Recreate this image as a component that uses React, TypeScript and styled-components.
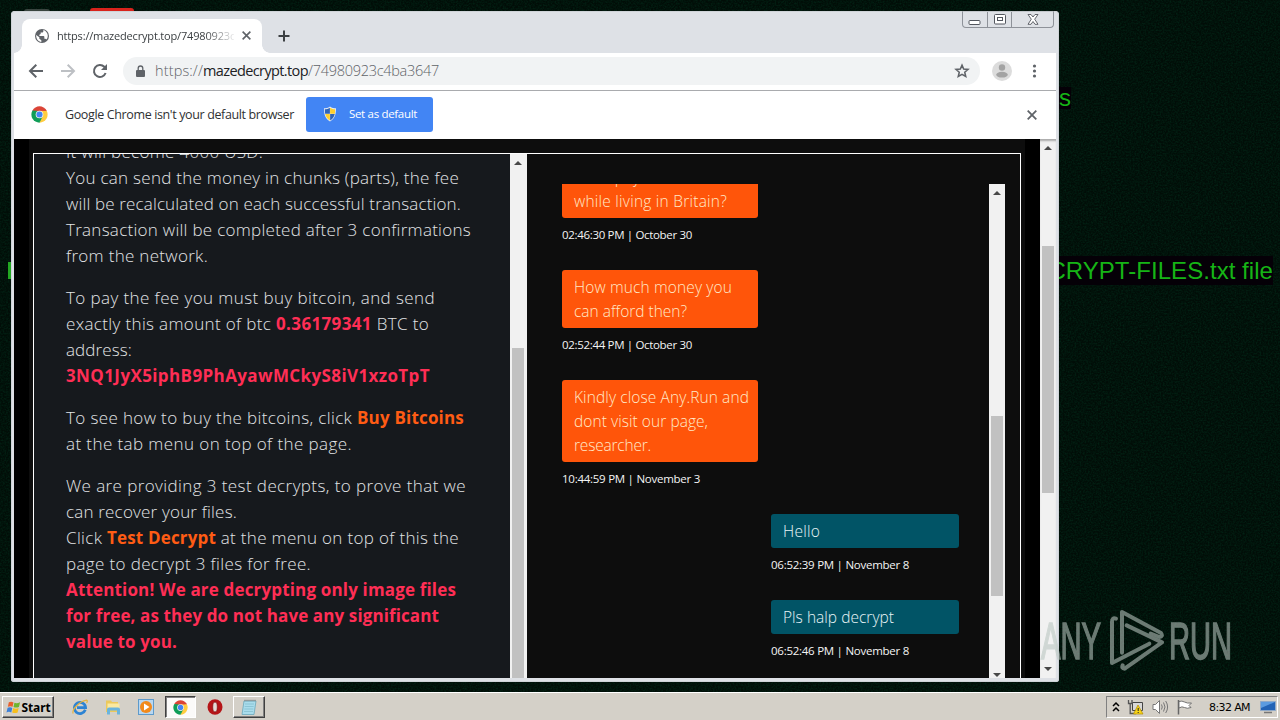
import React, { useLayoutEffect, useRef } from "react";
import styled, { createGlobalStyle, css } from "styled-components";

const Global = createGlobalStyle`
  * { box-sizing: border-box; }
  body { margin: 0; overflow: hidden; background: #01110a; }
  svg { display: block; flex: none; }
`;

const ui = `"Open Sans", "Noto Sans", sans-serif`;

/* ---------- text that is spaced out to a given width ---------- */
const FitSpan = styled.span`
  display: inline-block;
  white-space: pre;
`;

function Fit({ w, children }: { w: number; children: React.ReactNode }) {
  const ref = useRef<HTMLSpanElement>(null);
  useLayoutEffect(() => {
    const el = ref.current;
    if (!el) return;
    el.style.letterSpacing = "0px";
    const natural = el.getBoundingClientRect().width;
    const count = (el.textContent || "").length || 1;
    el.style.letterSpacing = `${(w - natural) / count}px`;
  }, [w]);
  return <FitSpan ref={ref}>{children}</FitSpan>;
}

/* ---------- desktop ---------- */
const Desktop = styled.div`
  position: relative;
  width: 1280px;
  height: 720px;
  overflow: hidden;
  background: #010d07;
  display: flex;
  flex-direction: column;
  justify-content: flex-end;
`;
const Grain = styled.svg`
  position: absolute;
  inset: 0;
`;
const WallText = styled.div<{ $top: number; $right: number; $h: number }>`
  position: absolute;
  top: ${(p) => p.$top}px;
  right: ${(p) => p.$right}px;
  height: ${(p) => p.$h}px;
  background: #050007;
  color: #16b416;
  font: 24px/${(p) => p.$h}px "Liberation Sans", Arial, sans-serif;
  white-space: nowrap;
`;
const WallEdge = styled.div`
  position: absolute;
  left: 8px;
  top: 262px;
  width: 3px;
  height: 17px;
  background: #22a822;
`;
const IconEdge = styled.div<{ $x: number; $y: number; $w: number; $c: string }>`
  position: absolute;
  left: ${(p) => p.$x}px;
  top: ${(p) => p.$y}px;
  width: ${(p) => p.$w}px;
  height: 6px;
  background: ${(p) => p.$c};
  border-radius: 3px 3px 0 0;
`;

/* ---------- browser window ---------- */
const Win = styled.div`
  position: absolute;
  left: 11px;
  top: 11px;
  width: 1048px;
  height: 671px;
  padding: 0 3px 4px;
  background: #dee1e6;
  border-radius: 4px 4px 3px 3px;
  box-shadow: inset 0 0 0 1px #cfd3d8;
  display: flex;
  flex-direction: column;
  font-family: ${ui};
`;
const TitleBar = styled.div`
  height: 42px;
  flex: none;
  display: flex;
  align-items: flex-start;
  padding-left: 8px;
`;
const Tab = styled.div`
  position: relative;
  margin-top: 8px;
  width: 240px;
  height: 34px;
  background: #fff;
  border-radius: 8px 8px 0 0;
  display: flex;
  align-items: center;
  padding: 0 11px 1px 12px;
  font-size: 11px;
  color: #3c4043;
  &::before, &::after {
    content: "";
    position: absolute;
    bottom: 0;
    width: 8px;
    height: 8px;
  }
  &::before { left: -8px; background: radial-gradient(circle at 0 0, transparent 7.5px, #fff 8px); }
  &::after { right: -8px; background: radial-gradient(circle at 100% 0, transparent 7.5px, #fff 8px); }
`;
const TabLabel = styled.div`
  width: 177px;
  margin: 0 8px 0 7px;
  white-space: nowrap;
  mask-image: linear-gradient(90deg, #000 148px, transparent 180px);
`;
const NewTab = styled.div`
  margin: 18px 0 0 15px;
`;
const Controls = styled.div`
  margin-left: auto;
  margin-right: 2px;
  width: 92px;
  height: 17px;
  display: flex;
  border: 1px solid #8e9299;
  border-top-color: #c3c7cc;
  border-radius: 0 0 4px 4px;
`;
const Control = styled.div<{ $w: number }>`
  width: ${(p) => p.$w}px;
  display: flex;
  align-items: center;
  justify-content: center;
  padding-bottom: 1px;
  & + & { border-left: 1px solid #8e9299; }
`;
const ToolBar = styled.div`
  height: 38px;
  flex: none;
  background: #fff;
  border-bottom: 1px solid #a9abae;
  display: flex;
  align-items: center;
  padding: 0 14px 1px;
`;
const NavIcons = styled.div`
  display: flex;
  gap: 16px;
  margin-right: 15px;
`;
const Omnibox = styled.div`
  width: 857px;
  height: 28px;
  border-radius: 14px;
  background: #f1f3f4;
  display: flex;
  align-items: center;
  padding: 0 10px 0 12px;
  font-size: 14.5px;
  font-weight: 300;
  color: #5f6368;
  svg:last-child { margin-left: auto; }
`;
const Url = styled.div`
  margin: -2px 0 0 9px;
  b { font-weight: 400; color: #202124; }
`;
const Avatar = styled.div`
  margin: 0 16px 0 12px;
`;
const InfoBar = styled.div`
  height: 48px;
  flex: none;
  background: #fff;
  display: flex;
  align-items: center;
  padding: 0 19px 1px 17px;
  font-size: 12.5px;
  color: #2f3133;
  svg:last-child { margin-left: auto; }
`;
const InfoText = styled.div`
  width: 241px;
  margin-left: 17px;
`;
const DefaultButton = styled.div`
  width: 127px;
  height: 35px;
  margin-top: -1px;
  border-radius: 3px;
  background: #4285f4;
  color: #fff;
  display: flex;
  align-items: center;
  gap: 11px;
  padding: 0 0 1px 16px;
  font-size: 11.5px;
`;

/* ---------- web page ---------- */
const Page = styled.div`
  flex: 1;
  min-height: 0;
  display: flex;
  background: #000;
  padding-left: 15px;
`;
const Body = styled.div`
  width: 996px;
  margin-right: 15px;
  background: #0d0d0d;
  padding: 14px 4px 0;
`;
const Frame = styled.div`
  height: 100%;
  border: 1px solid #fff;
  border-bottom: 0;
  display: flex;
  overflow: hidden;
`;
const Info = styled.div`
  width: 476px;
  height: 100%;
  background: #16191d;
  overflow: hidden;
  display: flex;
  flex-direction: column;
  padding-left: 32px;
`;
const Para = styled.div<{ $first?: boolean }>`
  margin: ${(p) => (p.$first ? "-15px 0 16px" : "0 0 16px")};
  font-size: 17px;
  font-weight: 300;
  line-height: 26px;
  color: #e2e4e6;
  display: flex;
  flex-direction: column;
  align-items: flex-start;
`;
const Strong = styled.span<{ $c: "red" | "orange" }>`
  font-weight: 700;
  color: ${(p) => (p.$c === "red" ? "#ff2e55" : "#ff5c14")};
`;
const Bar = styled.div<{ $w?: number; $edge?: boolean }>`
  width: ${(p) => p.$w || 16}px;
  height: 100%;
  flex: none;
  background: #f1f1f1;
  display: flex;
  flex-direction: column;
  align-items: center;
  padding-right: ${(p) => (p.$w ? p.$w - 16 : 0)}px;
  ${(p) => p.$edge && css`box-shadow: inset 0 3px 2px -1px #aaa;`}
`;
const Thumb = styled.div<{ $gap: number; $h: number }>`
  width: 12px;
  flex: none;
  margin-top: ${(p) => p.$gap}px;
  height: ${(p) => p.$h}px;
  background: #c1c1c1;
`;
const Arrow = styled.div<{ $down?: boolean; $gap: number }>`
  width: 0;
  height: 0;
  flex: none;
  border: 4px solid transparent;
  ${(p) =>
    p.$down
      ? css`border-top-color: #484848; border-bottom: 0; margin-top: auto; margin-bottom: ${p.$gap}px;`
      : css`border-bottom-color: #484848; border-top: 0; margin-top: ${p.$gap}px;`}
`;
const Chat = styled.div`
  flex: 1;
  padding: 30px 15px 0 35px;
  display: flex;
`;
const Messages = styled.div`
  flex: 1;
  height: 100%;
  overflow: hidden;
  display: flex;
  flex-direction: column;
`;
const Message = styled.div<{ $mine?: boolean; $lift?: number }>`
  flex: none;
  width: ${(p) => (p.$mine ? 188 : 196)}px;
  margin-left: ${(p) => (p.$mine ? 209 : 0)}px;
  margin-top: ${(p) => -(p.$lift || 0)}px;
  margin-bottom: 24px;
`;
const Bubble = styled.div<{ $mine?: boolean }>`
  padding: 5px 0 5px 12px;
  border-radius: 3px;
  background: ${(p) => (p.$mine ? "#015466" : "#ff550a")};
  color: ${(p) => (p.$mine ? "#e9f5f7" : "#ffe9c8")};
  font-size: 15.5px;
  font-weight: 300;
  line-height: 24px;
  display: flex;
  flex-direction: column;
  align-items: flex-start;
`;
const Stamp = styled.div`
  height: 28px;
  padding-top: 8px;
  line-height: 17px;
  font-size: 11.5px;
  color: #f4f4f4;
`;

/* ---------- taskbar ---------- */
const TaskBar = styled.div`
  position: relative;
  height: 28px;
  background: #d4d0c8;
  border-top: 1px solid #fff;
  display: flex;
  align-items: center;
  padding: 3px 2px 2px;
  font: 11px "DejaVu Sans", Tahoma, sans-serif;
`;
const TaskButton = styled.div<{ $w: number; $down?: boolean }>`
  width: ${(p) => p.$w}px;
  height: 22px;
  display: flex;
  align-items: center;
  justify-content: center;
  gap: 1px;
  font: bold 12px "Noto Sans", Tahoma, sans-serif;
  border: 1px solid;
  border-color: ${(p) => (p.$down ? "#404040 #fff #fff #404040" : "#fff #404040 #404040 #fff")};
  box-shadow: ${(p) => (p.$down ? "inset 1px 1px #808080" : "inset -1px -1px #808080")};
  background: ${(p) => (p.$down ? "#fbfaf9" : "#d4d0c8")};
`;
const Quick = styled.div`
  display: flex;
  gap: 17px;
  margin: 0 11px 0 18px;
`;
const Launcher = styled.div`
  margin: 0 10px 0 11px;
`;
const Tray = styled.div`
  margin-left: auto;
  width: 172px;
  height: 22px;
  border: 1px solid;
  border-color: #808080 #fff #fff #808080;
  display: flex;
  align-items: center;
  gap: 7px;
  padding: 0 1px 0 5px;
`;
const Clock = styled.div`
  width: 41px;
  margin-left: 9px;
  margin-right: auto;
  white-space: nowrap;
`;
const Watermark = styled.svg`
  position: absolute;
  left: 1036px;
  top: 602px;
`;

/* ---------- icons ---------- */
const ChromeLogo = ({ size = 18 }: { size?: number }) => (
  <svg width={size} height={size} viewBox="0 0 48 48">
    <path d="M24 24 4.1 12.5A23 23 0 0 1 43.9 12.5Z" fill="#db4437" />
    <path d="M24 24 43.9 12.5A23 23 0 0 1 24 47Z" fill="#ffcd40" />
    <path d="M24 24 24 47A23 23 0 0 1 4.1 12.5Z" fill="#0f9d58" />
    <path d="M24 13.5H43.9L33.5 29Z" fill="#ffcd40" />
    <path d="M33.2 29.2 24 47 20 32Z" fill="#0f9d58" />
    <path d="M14.8 29.2 4.1 12.5 21 14Z" fill="#0f9d58" />
    <path d="M24 13.5H43.9L42 10H24Z" fill="#db4437" />
    <circle cx="24" cy="24" r="10.8" fill="#f1f1f1" />
    <circle cx="24" cy="24" r="8.6" fill="#4285f4" />
  </svg>
);
const Cross = ({ s = 9 }: { s?: number }) => (
  <svg width={s} height={s} viewBox="0 0 10 10" stroke="#5f6368" strokeWidth="1.8">
    <path d="M.7.7 9.3 9.3M9.3.7.7 9.3" />
  </svg>
);
const Globe = () => (
  <svg width="16" height="16" viewBox="0 0 24 24">
    <circle cx="12" cy="12" r="10.5" fill="#5f6368" />
    <path d="M3.2 10.5 8 14v2l3 2.3V21C6.5 20.5 3 16.5 3.2 10.5ZM14 3v1.8c0 1.2-.9 2-2 2h-2v2.2L8 10v2h6.2c.8 0 1.3.6 1.3 1.3V16h1.2c.9 0 1.6.6 1.9 1.4A9 9 0 0 0 14 3Z" fill="#fff" />
  </svg>
);
const Shield = () => (
  <svg width="16" height="16" viewBox="0 0 16 16">
    <path d="M8 .5C6 2 4 2.2 2 2.2 2 8 3 12.5 8 15.5 13 12.5 14 8 14 2.2 12 2.2 10 2 8 .5Z" fill="#e8eef5" />
    <path d="M7.9 1.8C6 3 4.6 3.3 2.8 3.3L3.1 7.8H7.9Z" fill="#2f64b9" />
    <path d="M8.1 1.8C10 3 11.4 3.3 13.2 3.3L12.9 7.8H8.1Z" fill="#ffd02e" />
    <path d="M3.2 8C4 11 5.2 13 7.9 14.6V8Z" fill="#ffd02e" />
    <path d="M12.8 8C12 11 10.8 13 8.1 14.6V8Z" fill="#2f64b9" />
  </svg>
);

type Msg = { lines: [string, number][]; stamp: string; w: number; mine?: boolean; lift?: number };
const messages: Msg[] = [
  { lines: [["Can I pay it", 80], ["while living in Britain?", 153]], stamp: "02:46:30 PM | October 30", w: 130, lift: 24 },
  { lines: [["How much money you", 158], ["can afford then?", 113]], stamp: "02:52:44 PM | October 30", w: 130 },
  { lines: [["Kindly close Any.Run and", 175], ["dont visit our page,", 134], ["researcher.", 77]], stamp: "10:44:59 PM | November 3", w: 138 },
  { lines: [["Hello", 37]], stamp: "06:52:39 PM | November 8", w: 138, mine: true },
  { lines: [["Pls halp decrypt", 111]], stamp: "06:52:46 PM | November 8", w: 138, mine: true },
];

export default function App() {
  return (
    <>
      <Global />
      <Desktop>
        <Grain width="1280" height="720">
          <filter id="grain" colorInterpolationFilters="sRGB">
            <feTurbulence type="fractalNoise" baseFrequency="0.6" numOctaves="2" seed="4" />
            <feColorMatrix values="0 0 0 0 0.01  0 0 0 0 0.2  0 0 0 0 0.12  0 1 0 0 -0.34" />
          </filter>
          <rect width="1280" height="720" filter="url(#grain)" />
        </Grain>
        <WallText $top={87} $right={209} $h={22}>files</WallText>
        <WallText $top={256} $right={7} $h={29}><Fit w={258}>DECRYPT-FILES.txt file</Fit></WallText>
        <WallEdge />
        <IconEdge $x={24} $y={9} $w={26} $c="#39443f" />
        <IconEdge $x={90} $y={8} $w={44} $c="#d8231c" />

        <Win>
          <TitleBar>
            <Tab>
              <Globe />
              <TabLabel><Fit w={178}>https://mazedecrypt.top/74980923c</Fit></TabLabel>
              <Cross />
            </Tab>
            <NewTab>
              <svg width="14" height="14" viewBox="0 0 14 14" stroke="#3c4043" strokeWidth="2"><path d="M7 1.5V12.5M1.5 7H12.5" /></svg>
            </NewTab>
            <Controls>
              <Control $w={24}>
                <svg width="13" height="13" viewBox="0 0 13 13"><rect x="1" y="7.5" width="11" height="4" rx="1" fill="#fff" stroke="#53575f" /></svg>
              </Control>
              <Control $w={25}>
                <svg width="12" height="11" viewBox="0 0 12 11" fill="#fff" stroke="#53575f"><rect x=".5" y=".5" width="11" height="9.5" rx="1" /><rect x="3.5" y="3.5" width="5" height="3" /></svg>
              </Control>
              <Control $w={42}>
                <svg width="12" height="11" viewBox="0 0 12 11"><path d="M1 .5H4L6 3 8 .5H11L7.7 5.2 11 10.3H8L6 7.5 4 10.3H1L4.3 5.2Z" fill="#fff" stroke="#53575f" strokeWidth=".9" /></svg>
              </Control>
            </Controls>
          </TitleBar>

          <ToolBar>
            <NavIcons>
              <svg width="16" height="16" viewBox="0 0 16 16" fill="none" stroke="#5f6368" strokeWidth="2"><path d="M15 8H2.5M8.3 1.7 2 8 8.3 14.3" /></svg>
              <svg width="16" height="16" viewBox="0 0 16 16" fill="none" stroke="#bdc0c4" strokeWidth="2"><path d="M1 8H13.5M7.7 1.7 14 8 7.7 14.3" /></svg>
              <svg width="16" height="16" viewBox="0 0 16 16" fill="none" stroke="#5f6368" strokeWidth="2"><path d="M13.6 10A6 6 0 1 1 12.3 3.8L14 5.5" /><path d="M15 1V7H9Z" fill="#5f6368" stroke="none" /></svg>
            </NavIcons>
            <Omnibox>
              <svg width="11" height="13" viewBox="0 0 11 13"><rect x="1" y="5" width="9" height="7" rx="1" fill="#5f6368" /><path d="M3.2 5V3.3a2.3 2.3 0 0 1 4.6 0V5" fill="none" stroke="#5f6368" strokeWidth="1.3" /></svg>
              <Url><Fit w={48}>https://</Fit><Fit w={105}><b>mazedecrypt.top</b></Fit><Fit w={131}>/74980923c4ba3647</Fit></Url>
              <svg width="16" height="16" viewBox="0 0 24 24" fill="none" stroke="#5f6368" strokeWidth="2.3"><path d="M12 3.2 14.5 9.1 21 9.7 16.1 13.9 17.6 20.2 12 16.9 6.4 20.2 7.9 13.9 3 9.7 9.5 9.1Z" /></svg>
            </Omnibox>
            <Avatar>
              <svg width="20" height="20" viewBox="0 0 20 20"><circle cx="10" cy="10" r="10" fill="#dcdcdc" /><circle cx="10" cy="6.5" r="3.2" fill="#a3a3a3" /><ellipse cx="10" cy="13.7" rx="5.8" ry="2.9" fill="#a3a3a3" /></svg>
            </Avatar>
            <svg width="12" height="16" viewBox="0 0 12 16" fill="#5f6368"><circle cx="6.5" cy="3" r="1.6" /><circle cx="6.5" cy="8" r="1.6" /><circle cx="6.5" cy="13" r="1.6" /></svg>
          </ToolBar>

          <InfoBar>
            <ChromeLogo size={17} />
            <InfoText><Fit w={229}>Google Chrome isn't your default browser</Fit></InfoText>
            <DefaultButton><Shield /><Fit w={68}>Set as default</Fit></DefaultButton>
            <Cross s={10} />
          </InfoBar>

          <Page>
            <Body>
              <Frame>
                <Info>
                  <Para $first>
                    <Fit w={197}>It will become 4000 USD.</Fit>
                    <Fit w={393}>You can send the money in chunks (parts), the fee</Fit>
                    <Fit w={395}>will be recalculated on each successful transaction.</Fit>
                    <Fit w={405}>Transaction will be completed after 3 confirmations</Fit>
                    <Fit w={142}>from the network.</Fit>
                  </Para>
                  <Para>
                    <Fit w={369}>To pay the fee you must buy bitcoin, and send</Fit>
                    <Fit w={363}>exactly this amount of btc <Strong $c="red">0.36179341</Strong> BTC to</Fit>
                    <Fit w={66}>address:</Fit>
                    <Fit w={364}><Strong $c="red">3NQ1JyX5iphB9PhAyawMCkyS8iV1xzoTpT</Strong></Fit>
                  </Para>
                  <Para>
                    <span><Fit w={291}>To see how to buy the bitcoins, click </Fit><Fit w={107}><Strong $c="orange">Buy Bitcoins</Strong></Fit></span>
                    <Fit w={286}>at the tab menu on top of the page.</Fit>
                  </Para>
                  <Para>
                    <Fit w={400}>We are providing 3 test decrypts, to prove that we</Fit>
                    <Fit w={171}>can recover your files.</Fit>
                    <span><Fit w={41}>Click </Fit><Fit w={109}><Strong $c="orange">Test Decrypt</Strong></Fit><Fit w={243}> at the menu on top of this the</Fit></span>
                    <Fit w={245}>page to decrypt 3 files for free.</Fit>
                    <Fit w={390}><Strong $c="red">Attention! We are decrypting only image files</Strong></Fit>
                    <Fit w={373}><Strong $c="red">for free, as they do not have any significant</Strong></Fit>
                    <Fit w={111}><Strong $c="red">value to you.</Strong></Fit>
                  </Para>
                </Info>
                <Bar $w={17}>
                  <Arrow $gap={7} />
                  <Thumb $gap={183} $h={340} />
                </Bar>
                <Chat>
                  <Messages>
                    {messages.map((m) => (
                      <Message key={m.stamp} $mine={m.mine} $lift={m.lift}>
                        <Bubble $mine={m.mine}>
                          {m.lines.map(([t, w]) => <Fit key={t} w={w}>{t}</Fit>)}
                        </Bubble>
                        <Stamp><Fit w={m.w}>{m.stamp}</Fit></Stamp>
                      </Message>
                    ))}
                  </Messages>
                  <Bar>
                    <Arrow $gap={7} />
                    <Thumb $gap={221} $h={180} />
                    <Arrow $down $gap={1} />
                  </Bar>
                </Chat>
              </Frame>
            </Body>
            <Bar $edge>
              <Arrow $gap={7} />
              <Thumb $gap={96} $h={247} />
              <Arrow $down $gap={7} />
            </Bar>
          </Page>
        </Win>

        <Watermark width="200" height="76" viewBox="1036 602 200 76">
          <g fill="#b9c6c0" stroke="#b9c6c0" strokeWidth="1.6" opacity=".58" fontFamily="Liberation Sans" fontSize="51">
            <text x="1041" y="659" textLength="60" lengthAdjust="spacingAndGlyphs">ANY</text>
            <text x="1169" y="659" textLength="63" lengthAdjust="spacingAndGlyphs">RUN</text>
          </g>
          <g transform="translate(980 590) scale(.33333)" fill="none" stroke="#b9c6c0" strokeWidth="12" opacity=".58" strokeLinejoin="round" strokeLinecap="round">
            <path d="M408 86Q396 82 396 96V219L508 161" />
            <path d="M426 188V66L543 129Q550 140 538 141L512 131" />
            <path d="M440 106 546 157 434 236Q424 236 428 226" />
          </g>
        </Watermark>

        <TaskBar>
          <TaskButton $w={52}>
            <svg width="15" height="15" viewBox="0 0 16 16">
              <path d="M3 2.5Q5.5 1 8 2.6L7 7.3Q4.5 6 2 7.3Z" fill="#e8602c" />
              <path d="M9 3Q11.5 4.2 15 2.5L13.8 7.4Q11 8.8 8 7.5Z" fill="#6fb52e" />
              <path d="M1.7 8.3Q4.3 7 6.7 8.4L5.6 13.2Q3 12 .5 13.3Z" fill="#3c80d8" />
              <path d="M7.7 8.6Q10.5 9.9 13.5 8.5L12.4 13.2Q9.5 14.6 6.6 13.4Z" fill="#f7bf1d" />
            </svg>
            <Fit w={29}>Start</Fit>
          </TaskButton>
          <Quick>
            <svg width="16" height="16" viewBox="0 0 16 16">
              <path d="M13.3 10.8A5.6 5.6 0 1 1 13.6 8.6H5" fill="none" stroke="#2d83d3" strokeWidth="2.7" />
              <path d="M1.2 14.5C-.5 11 7 2.5 14.6 1.2 15.8 1.5 15.2 3 14.5 4" fill="none" stroke="#e3b341" strokeWidth="1.2" />
            </svg>
            <svg width="16" height="16" viewBox="0 0 16 16">
              <path d="M1 1.5H6L7 3H13V13H1Z" fill="#ecc95c" />
              <path d="M2.5 4.5H14.5V11H2.5Z" fill="#fbe9a0" />
              <path d="M2 15.5V10.5Q2 8.5 4 8.5H13Q15 8.5 15 10.5V15.5H12V11.5H5V15.5Z" fill="#6ab4dd" />
            </svg>
            <svg width="16" height="16" viewBox="0 0 16 16">
              <rect x=".5" y=".5" width="15" height="15" fill="#b9d7f0" stroke="#5d9acb" />
              <circle cx="8" cy="8" r="6" fill="#f28a1b" />
              <path d="M6 4.5 11.5 8 6 11.5Z" fill="#fff" />
            </svg>
          </Quick>
          <TaskButton $w={31} $down><ChromeLogo size={15} /></TaskButton>
          <Launcher>
            <svg width="16" height="16" viewBox="0 0 16 16">
              <ellipse cx="8" cy="8" rx="7.5" ry="7.7" fill="#b51518" />
              <ellipse cx="8" cy="8" rx="2.3" ry="5" fill="#e4dcd6" stroke="#7c0c0e" strokeWidth=".7" />
            </svg>
          </Launcher>
          <TaskButton $w={32}>
            <svg width="16" height="17" viewBox="0 0 16 17">
              <path d="M3 2H15L13 15.5H1Z" fill="#a9dcec" stroke="#6aa7bb" strokeWidth=".8" />
              <path d="M4 5H13M3.7 7.5H12.6M3.3 10H12.3M3 12.5H12" stroke="#7fbacb" strokeWidth=".7" />
              <path d="M3.5 1.5H14.5" stroke="#777" strokeWidth="1.5" strokeDasharray="1 1" />
            </svg>
          </TaskButton>
          <Tray>
            <svg width="8" height="12" viewBox="0 0 8 12" fill="none" stroke="#000" strokeWidth="1.5"><path d="M1 5 4 2 7 5M1 10 4 7 7 10" /></svg>
            <svg width="18" height="16" viewBox="0 0 18 16">
              <path d="M5.5 3.5H15.5V11.5H5.5Z" fill="#d8d8d8" stroke="#444" />
              <path d="M1.5 1V4.5H5V1M3.2 4.5V14.5H9" fill="none" stroke="#555" strokeWidth="1.3" />
              <path d="M11 6 16 15H6.5Z" fill="#f7d417" stroke="#b18a00" strokeWidth=".7" />
              <path d="M11.2 9V12M11.2 13V14" stroke="#222" />
            </svg>
            <svg width="17" height="16" viewBox="0 0 17 16" fill="none" stroke="#777">
              <path d="M1 5.5H3.5L7.5 1.5V14.5L3.5 10.5H1Z" fill="#fff" />
              <path d="M9.5 5.5Q11 8 9.5 10.5M11.5 3.5Q14.5 8 11.5 12.5M13.7 2Q17.5 8 13.7 14" />
            </svg>
            <svg width="17" height="16" viewBox="0 0 17 16">
              <path d="M2.5 1V15.5" stroke="#666" strokeWidth="1.5" />
              <path d="M3 2.5Q6 1.5 8.5 3T15.5 4L13 6.5 15 8.5Q11 10 8.5 8.5T3 9Z" fill="#fff" stroke="#666" strokeWidth=".9" />
            </svg>
            <Clock><Fit w={41}>8:32 AM</Fit></Clock>
            <svg width="16" height="14" viewBox="0 0 16 14">
              <path d="M.5 1.5H15.5V10.5H.5Z" fill="#2363b5" stroke="#8fa9c8" />
              <path d="M1 2H15L1 8Z" fill="#5b9be0" />
              <path d="M4 12.5H12" stroke="#777" strokeWidth="1.5" />
            </svg>
          </Tray>
        </TaskBar>
      </Desktop>
    </>
  );
}
